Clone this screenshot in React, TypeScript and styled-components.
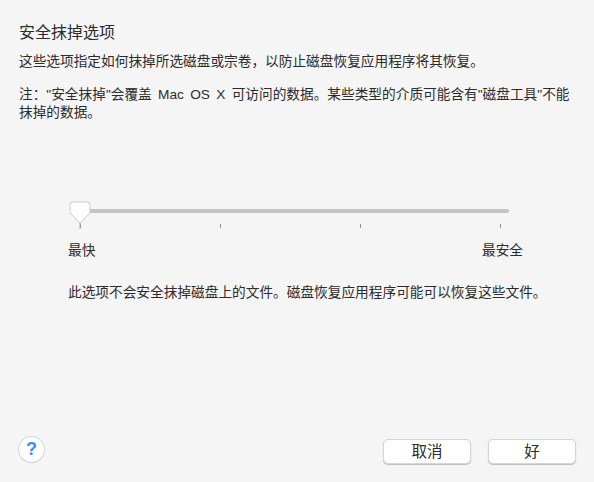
import { createGlobalStyle, styled } from "styled-components"

const GlobalStyle = createGlobalStyle`
  html, body {
    margin: 0;
    padding: 0;
    background: #f5f5f5;
  }
  body {
    font-family: "Liberation Sans", "Noto Sans CJK SC", sans-serif;
    color: #2b2b2b;
  }
`

const ticks = [0, 1, 2, 3]

export default () => {
  return (
    <Sheet>
      <GlobalStyle />
      <Title>安全抹掉选项</Title>
      <Para>这些选项指定如何抹掉所选磁盘或宗卷，以防止磁盘恢复应用程序将其恢复。</Para>
      <Note>注："安全抹掉"会覆盖 Mac OS X 可访问的数据。某些类型的介质可能含有"磁盘工具"不能抹掉的数据。</Note>

      <SliderBox>
        <Track>
          <Thumb viewBox="0 0 22 28" width="22" height="28">
            <path
              d="M3.5 1 H18.5 Q21 1 21 3.5 V10.5 Q21 12 20 13 L11 22 L2 13 Q1 12 1 10.5 V3.5 Q1 1 3.5 1 Z"
              fill="#ffffff"
              stroke="#cacaca"
              strokeWidth="1"
            />
            <path d="M11 22 V28" stroke="#a8a8a8" strokeWidth="1" />
          </Thumb>
        </Track>
        <Ticks>
          {ticks.map((t) => (
            <Tick key={t} />
          ))}
        </Ticks>
        <Labels>
          <span>最快</span>
          <span>最安全</span>
        </Labels>
      </SliderBox>

      <Hint>此选项不会安全抹掉磁盘上的文件。磁盘恢复应用程序可能可以恢复这些文件。</Hint>

      <Footer>
        <HelpButton>?</HelpButton>
        <Actions>
          <PushButton>取消</PushButton>
          <PushButton>好</PushButton>
        </Actions>
      </Footer>
    </Sheet>
  )
}

const Sheet = styled.div`
  width: 594px;
  height: 482px;
  box-sizing: border-box;
  padding: 24px 18px 18px 19px;
  display: flex;
  flex-direction: column;
  overflow: hidden;
`

const Title = styled.div`
  font-size: 16px;
  line-height: 18px;
`

const Para = styled.div`
  margin-top: 11px;
  font-size: 13.68px;
  line-height: 18px;
`

const Note = styled(Para)`
  margin-top: 15px;
  width: 556px;
  word-spacing: 2.5px;
`

const SliderBox = styled.div`
  margin: 87px 0 0 49px;
  width: 455px;
`

const Track = styled.div`
  position: relative;
  margin-left: 12px;
  width: 429px;
  height: 4px;
  border-radius: 2px;
  background: #c4c4c4;
`

const Thumb = styled.svg`
  position: absolute;
  left: -11px;
  top: -8px;
`

const Ticks = styled.div`
  margin: 11px 0 0 12px;
  width: 421px;
  display: flex;
  justify-content: space-between;
`

const Tick = styled.div`
  width: 1px;
  height: 4px;
  background: #8f8f8f;
`

const Labels = styled.div`
  margin-top: 14px;
  display: flex;
  justify-content: space-between;
  font-size: 13.68px;
  line-height: 18px;
`

const Hint = styled.div`
  margin: 24px 0 0 49px;
  font-size: 13.68px;
  line-height: 18px;
  white-space: nowrap;
`

const Footer = styled.div`
  margin-top: auto;
  display: flex;
  justify-content: space-between;
  align-items: flex-end;
`

const HelpButton = styled.div`
  width: 25px;
  height: 25px;
  margin-bottom: 2px;
  border-radius: 50%;
  background: #ffffff;
  box-shadow: 0 0 0 1px #d8d8d8, 0 1px 1px #c4c4c4;
  color: #3b8cf5;
  font-size: 18px;
  font-weight: 700;
  line-height: 25px;
  text-align: center;
`

const Actions = styled.div`
  display: flex;
  gap: 17px;
`

const PushButton = styled.div`
  width: 88px;
  height: 25px;
  box-sizing: border-box;
  border: 1px solid #d6d6d6;
  border-radius: 5px;
  background: #ffffff;
  box-shadow: 0 1px 1px #bdbdbd;
  font-size: 15.5px;
  line-height: 23px;
  text-align: center;
`
